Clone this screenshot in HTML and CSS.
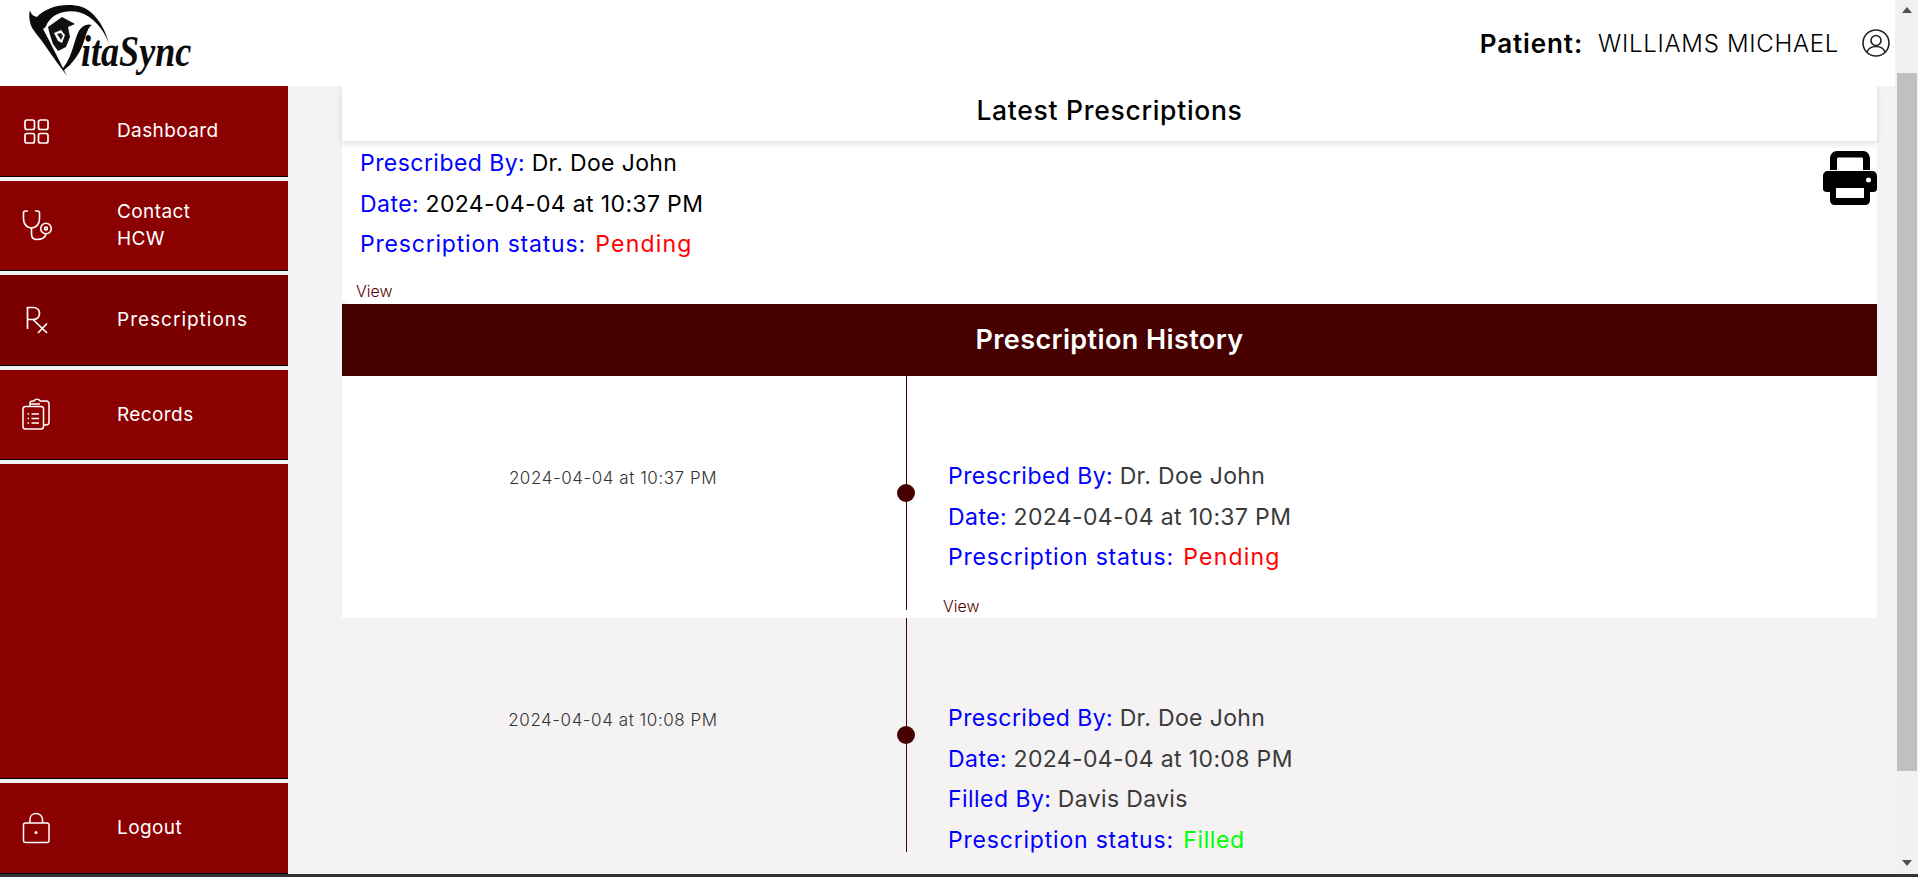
FILE: index.html
```html
<!DOCTYPE html>
<html lang="en">
<head>
<meta charset="utf-8">
<title>VitaSync</title>
<link rel="stylesheet" href="styles.css">
</head>
<body>
<div class="window">
  <div class="page">
    <header class="topbar">
      <div class="logo">
        <svg class="logo-mark" viewBox="0 0 100 78" width="100" height="78" aria-hidden="true">
          <path d="M10 10C11 14 13 16 17 17C26 7 45 2 62 7C75 12 85 27 89 44C84 29 72 16 60 12.500C48 9 34 13 29 21C26 24 27 27 23 29C28 38 38 58 47 76C42 69 32 56 24 44C18 35 11 29 10 22C9 18 9 14 10 10Z" fill="#0b0b0b"/>
          <path d="M28 27L42 17L55 24L48 27L50 37L46 47L38 51L33 44L30 35Z" fill="#111"/>
          <path d="M34 33L41 30L45 35L42 43L38 41Z" fill="#fff"/>
          <path d="M37 34L41 33L43 36L41 40Z" fill="#222"/>
          <path d="M43 68C51 58 53 46 57 35C60 27 66 23 72 25C67 28 66 36 63 44C59 55 52 64 43 71Z" fill="#0b0b0b"/>
        </svg>
        <span class="logo-text">itaSync</span>
      </div>
      <div class="user">
        <span class="user-role">Patient:</span>
        <span class="user-name">WILLIAMS MICHAEL</span>
        <svg class="user-icon" viewBox="0 0 28 28" width="28" height="28" aria-hidden="true">
          <circle cx="14" cy="14" r="13" fill="none" stroke="#222" stroke-width="1.6"/>
          <circle cx="14" cy="11.500" r="5" fill="none" stroke="#222" stroke-width="1.6"/>
          <path d="M5 23C6.500 19 10 17.500 14 17.500S21.500 19 23 23" fill="none" stroke="#222" stroke-width="1.6"/>
        </svg>
      </div>
    </header>
    <div class="body-row">
      <nav class="sidebar">
        <a class="nav-item">
          <svg class="nav-icon" viewBox="0 0 32 26" width="32" height="26" fill="none" stroke="#fff" stroke-width="1.700" aria-hidden="true">
            <rect x="3" y="2" width="9.500" height="9.500" rx="2"/><rect x="16.500" y="2" width="9.500" height="9.500" rx="2"/>
            <rect x="3" y="15.500" width="9.500" height="9.500" rx="2"/><rect x="16.500" y="15.500" width="9.500" height="9.500" rx="2"/>
          </svg>
          <span class="nav-label">Dashboard</span>
        </a>
        <a class="nav-item">
          <svg class="nav-icon" viewBox="0 0 32 32" width="32" height="32" fill="none" stroke="#fff" stroke-width="1.600" aria-hidden="true">
            <path d="M6 2H3.500C2 2 1.500 2.500 1.500 4V10C1.500 15 5 19 9.500 19S17.500 15 17.500 10V4C17.500 2.500 17 2 15.500 2H13"/>
            <path d="M9.500 19V25C9.500 29 12 30.500 15 30.500C19 30.500 23 29 24 25"/>
            <circle cx="24" cy="19.500" r="5.300"/><circle cx="24" cy="19.500" r="1.400"/>
          </svg>
          <span class="nav-label">Contact<br>HCW</span>
        </a>
        <a class="nav-item nav-item-active">
          <svg class="nav-icon" viewBox="0 0 32 32" width="32" height="32" fill="none" stroke="#fff" stroke-width="1.700" aria-hidden="true">
            <path d="M5.500 25V3.500H11C15 3.500 17.500 6 17.500 9.500S15 15.500 11 15.500H5.500M11 15.500L25 29M25 19.500L16 29"/>
          </svg>
          <span class="nav-label nav-label-wide">Prescriptions</span>
        </a>
        <a class="nav-item">
          <svg class="nav-icon" viewBox="0 0 32 32" width="32" height="32" fill="none" stroke="#fff" stroke-width="1.500" aria-hidden="true">
            <path d="M8 9V5C8 3.500 9 3 10.500 3H12C13 .8 17 .8 18 3H24C26 3 27 4 27 6V24C27 26 26 27 24 27H21.500"/>
            <rect x="1" y="8.500" width="20.500" height="22.500" rx="2.500"/>
            <path d="M8 6H18"/>
            <path d="M5.500 16H7M9.500 16H17M5.500 20.500H7M9.500 20.500H17M5.500 25H7M9.500 25H17"/>
          </svg>
          <span class="nav-label">Records</span>
        </a>
        <div class="nav-fill"></div>
        <a class="nav-item nav-item-last">
          <svg class="nav-icon" viewBox="0 0 32 32" width="32" height="32" fill="none" stroke="#fff" stroke-width="1.500" aria-hidden="true">
            <rect x="1.500" y="11" width="25.500" height="19.500" rx="2"/>
            <path d="M8 11V7.500C8 4 10.500 1.500 14 1.500S20.500 4 20.500 7.500V11"/>
            <circle cx="14" cy="20.500" r="1.500" fill="#fff" stroke="none"/>
          </svg>
          <span class="nav-label">Logout</span>
        </a>
      </nav>
      <main class="content">
        <section class="latest">
          <h2 class="latest-title">Latest Prescriptions</h2>
          <div class="latest-body">
            <svg class="print-icon" viewBox="0 0 54 54" width="54" height="54" aria-hidden="true">
              <path fill-rule="evenodd" d="M7 8C7 3.500 10 0 14 0H40C44 0 47 3.500 47 8V19H40V8C40 7 39.500 6.500 38.500 6.500H15.500C14.500 6.500 14 7 14 8V19H7Z"/>
              <path fill-rule="evenodd" d="M5 20H49C52 20 54 22 54 25V38C54 40 52.500 41 50 41H47V49C47 52 45 54 42 54H12C9 54 7 52 7 49V41H4C1.500 41 0 40 0 38V25C0 22 2 20 5 20ZM13 37V47H41V37ZM45.500 26.500A2.500 2.500 0 1 0 45.500 31.500A2.500 2.500 0 1 0 45.500 26.500Z"/>
            </svg>
            <p class="field"><span class="key">Prescribed By:</span> <span class="val-strong">Dr. Doe John</span></p>
            <p class="field"><span class="key">Date:</span> <span class="val-strong">2024-04-04 at 10:37 PM</span></p>
            <p class="field"><span class="key key-wide">Prescription status:</span> <span class="pending">Pending</span></p>
            <a class="view view-latest">View</a>
          </div>
        </section>
        <h2 class="history-title">Prescription History</h2>
        <section class="row row-white">
          <div class="row-date">2024-04-04 at 10:37 PM</div>
          <div class="row-axis"><span class="dot"></span></div>
          <div class="row-info">
            <p class="field"><span class="key">Prescribed By:</span> <span class="val">Dr. Doe John</span></p>
            <p class="field"><span class="key">Date:</span> <span class="val">2024-04-04 at 10:37 PM</span></p>
            <p class="field"><span class="key key-wide">Prescription status:</span> <span class="pending">Pending</span></p>
            <a class="view view-row">View</a>
          </div>
        </section>
        <section class="row">
          <div class="row-date">2024-04-04 at 10:08 PM</div>
          <div class="row-axis"><span class="dot"></span></div>
          <div class="row-info">
            <p class="field"><span class="key">Prescribed By:</span> <span class="val">Dr. Doe John</span></p>
            <p class="field"><span class="key">Date:</span> <span class="val">2024-04-04 at 10:08 PM</span></p>
            <p class="field"><span class="key">Filled By:</span> <span class="val">Davis Davis</span></p>
            <p class="field"><span class="key key-wide">Prescription status:</span> <span class="filled">Filled</span></p>
          </div>
        </section>
      </main>
    </div>
  </div>
  <div class="scrollbar">
    <span class="arrow-up"></span>
    <span class="thumb"></span>
    <span class="arrow-down"></span>
  </div>
</div>
<div class="taskbar-edge"></div>
</body>
</html>
```
FILE: styles.css
```css
* { box-sizing: border-box; }
html, body { margin: 0; height: 100%; overflow: hidden; }
body {
  font-family: Inter, "Noto Sans", sans-serif;
  background: #f4f2f3;
  display: flex;
  flex-direction: column;
}
p, h2 { margin: 0; font-weight: normal; }

.window { flex: 0 0 873.500px; display: flex; min-height: 0; }
.taskbar-edge { flex: 1; background: #333; }
.page { flex: 1; display: flex; flex-direction: column; min-width: 0; }

.scrollbar {
  flex: 0 0 23px;
  background: #f1f1f1;
  display: flex;
  flex-direction: column;
  align-items: center;
  padding: 7px 0 0 1px;
}
.arrow-up {
  width: 0; height: 0;
  border-left: 5px solid transparent; border-right: 5px solid transparent;
  border-bottom: 6px solid #505050;
}
.thumb { flex: 0 0 698px; width: 20px; background: #c0c0c0; margin-top: 60px; }
.arrow-down {
  width: 0; height: 0; margin-top: 89px;
  border-left: 5px solid transparent; border-right: 5px solid transparent;
  border-top: 6px solid #505050;
}

.topbar {
  flex: 0 0 86px;
  background: #fff;
  display: flex;
  align-items: center;
  justify-content: space-between;
  padding: 0 5px 0 20px;
}
.logo { display: flex; align-items: flex-start; height: 86px; width: 180px; }
.logo-mark { flex: 0 0 auto; overflow: visible; }
.logo-text {
  font-family: "Liberation Serif", serif;
  font-style: italic;
  font-weight: bold;
  font-size: 44px;
  line-height: 1;
  color: #0b0b0b;
  margin: 30px 0 0 -39px;
  transform: scaleX(.82);
  transform-origin: left;
}
.user { display: flex; align-items: center; color: #000; }
.user-role { font-size: 26px; font-weight: 600; letter-spacing: .9px; }
.user-name { font-size: 24px; font-weight: 300; margin-left: 15px; letter-spacing: .7px; }
.user-icon { margin-left: 23px; }

.body-row { flex: 1; display: flex; min-height: 0; }
.sidebar { flex: 0 0 288px; display: flex; flex-direction: column; }
.nav-item {
  flex: 0 0 90.500px;
  background: #8b0000;
  border-bottom: 1px solid #000;
  margin-bottom: 4px;
  display: flex;
  align-items: center;
  color: #fff;
}
.nav-item-active { background: #7a0000; }
.nav-item-last { margin-bottom: 0; }
.nav-fill { flex: 1; background: #8b0000; border-bottom: 1px solid #000; margin-bottom: 4px; }
.nav-icon { flex: 0 0 auto; margin-left: 22px; }
.nav-label { margin-left: 63px; font-size: 19px; line-height: 27px; letter-spacing: .4px; }
.nav-label-wide { letter-spacing: 1px; }

.content { flex: 1; min-width: 0; padding: 0 18px 0 54px; overflow: hidden; }
.latest { background: #fff; border-radius: 0 0 0 8px; }
.latest-title {
  height: 55px;
  line-height: 49px;
  text-align: center;
  font-size: 26.500px;
  font-weight: 500;
  letter-spacing: .7px;
  color: #000;
  background: #fff;
  box-shadow: 0 3px 6px rgba(0,0,0,.12);
  position: relative;
}
.latest-body { height: 163px; padding: 2px 0 0 18px; position: relative; }
.print-icon { position: absolute; right: 0; top: 10px; }
.field { font-size: 23px; line-height: 40.500px; height: 40.500px; white-space: nowrap; }
.key { color: #0000ff; letter-spacing: .45px; }
.key-wide { letter-spacing: .8px; }
.val-strong { color: #000; letter-spacing: .35px; }
.val { color: #3a3a3a; letter-spacing: .35px; }
.pending { color: #ff0000; letter-spacing: 1.200px; margin-left: 3px; }
.filled { color: #00ff00; letter-spacing: .6px; margin-left: 3px; }
.view {
  display: block;
  font-size: 16px;
  font-weight: 300;
  color: #5a0000;
  line-height: 20px;
}
.view-latest { margin: 16.500px 0 0 -4px; }
.view-row { margin: 18.500px 0 0 -5px; }

.history-title {
  height: 72px;
  line-height: 72px;
  text-align: center;
  background: #470000;
  color: #fff;
  font-size: 27px;
  font-weight: 600;
  letter-spacing: .4px;
}

.row { display: grid; grid-template-columns: 542px 44px 1fr; height: 242px; }
.row-white { background: #fff; }
.row-date {
  text-align: center;
  font-size: 17px;
  font-weight: 300;
  color: #333;
  padding-top: 90px;
  line-height: 24px;
  letter-spacing: .55px;
}
.row-axis { height: 234px; display: flex; align-items: center; justify-content: center; position: relative; }
.row-axis::before { content: ""; position: absolute; top: 0; bottom: 0; left: 22px; width: 1px; background: #4a0000; }
.dot { width: 18px; height: 18px; border-radius: 50%; background: #470000; position: relative; }
.row-info { padding: 80px 0 0 20px; }
```
